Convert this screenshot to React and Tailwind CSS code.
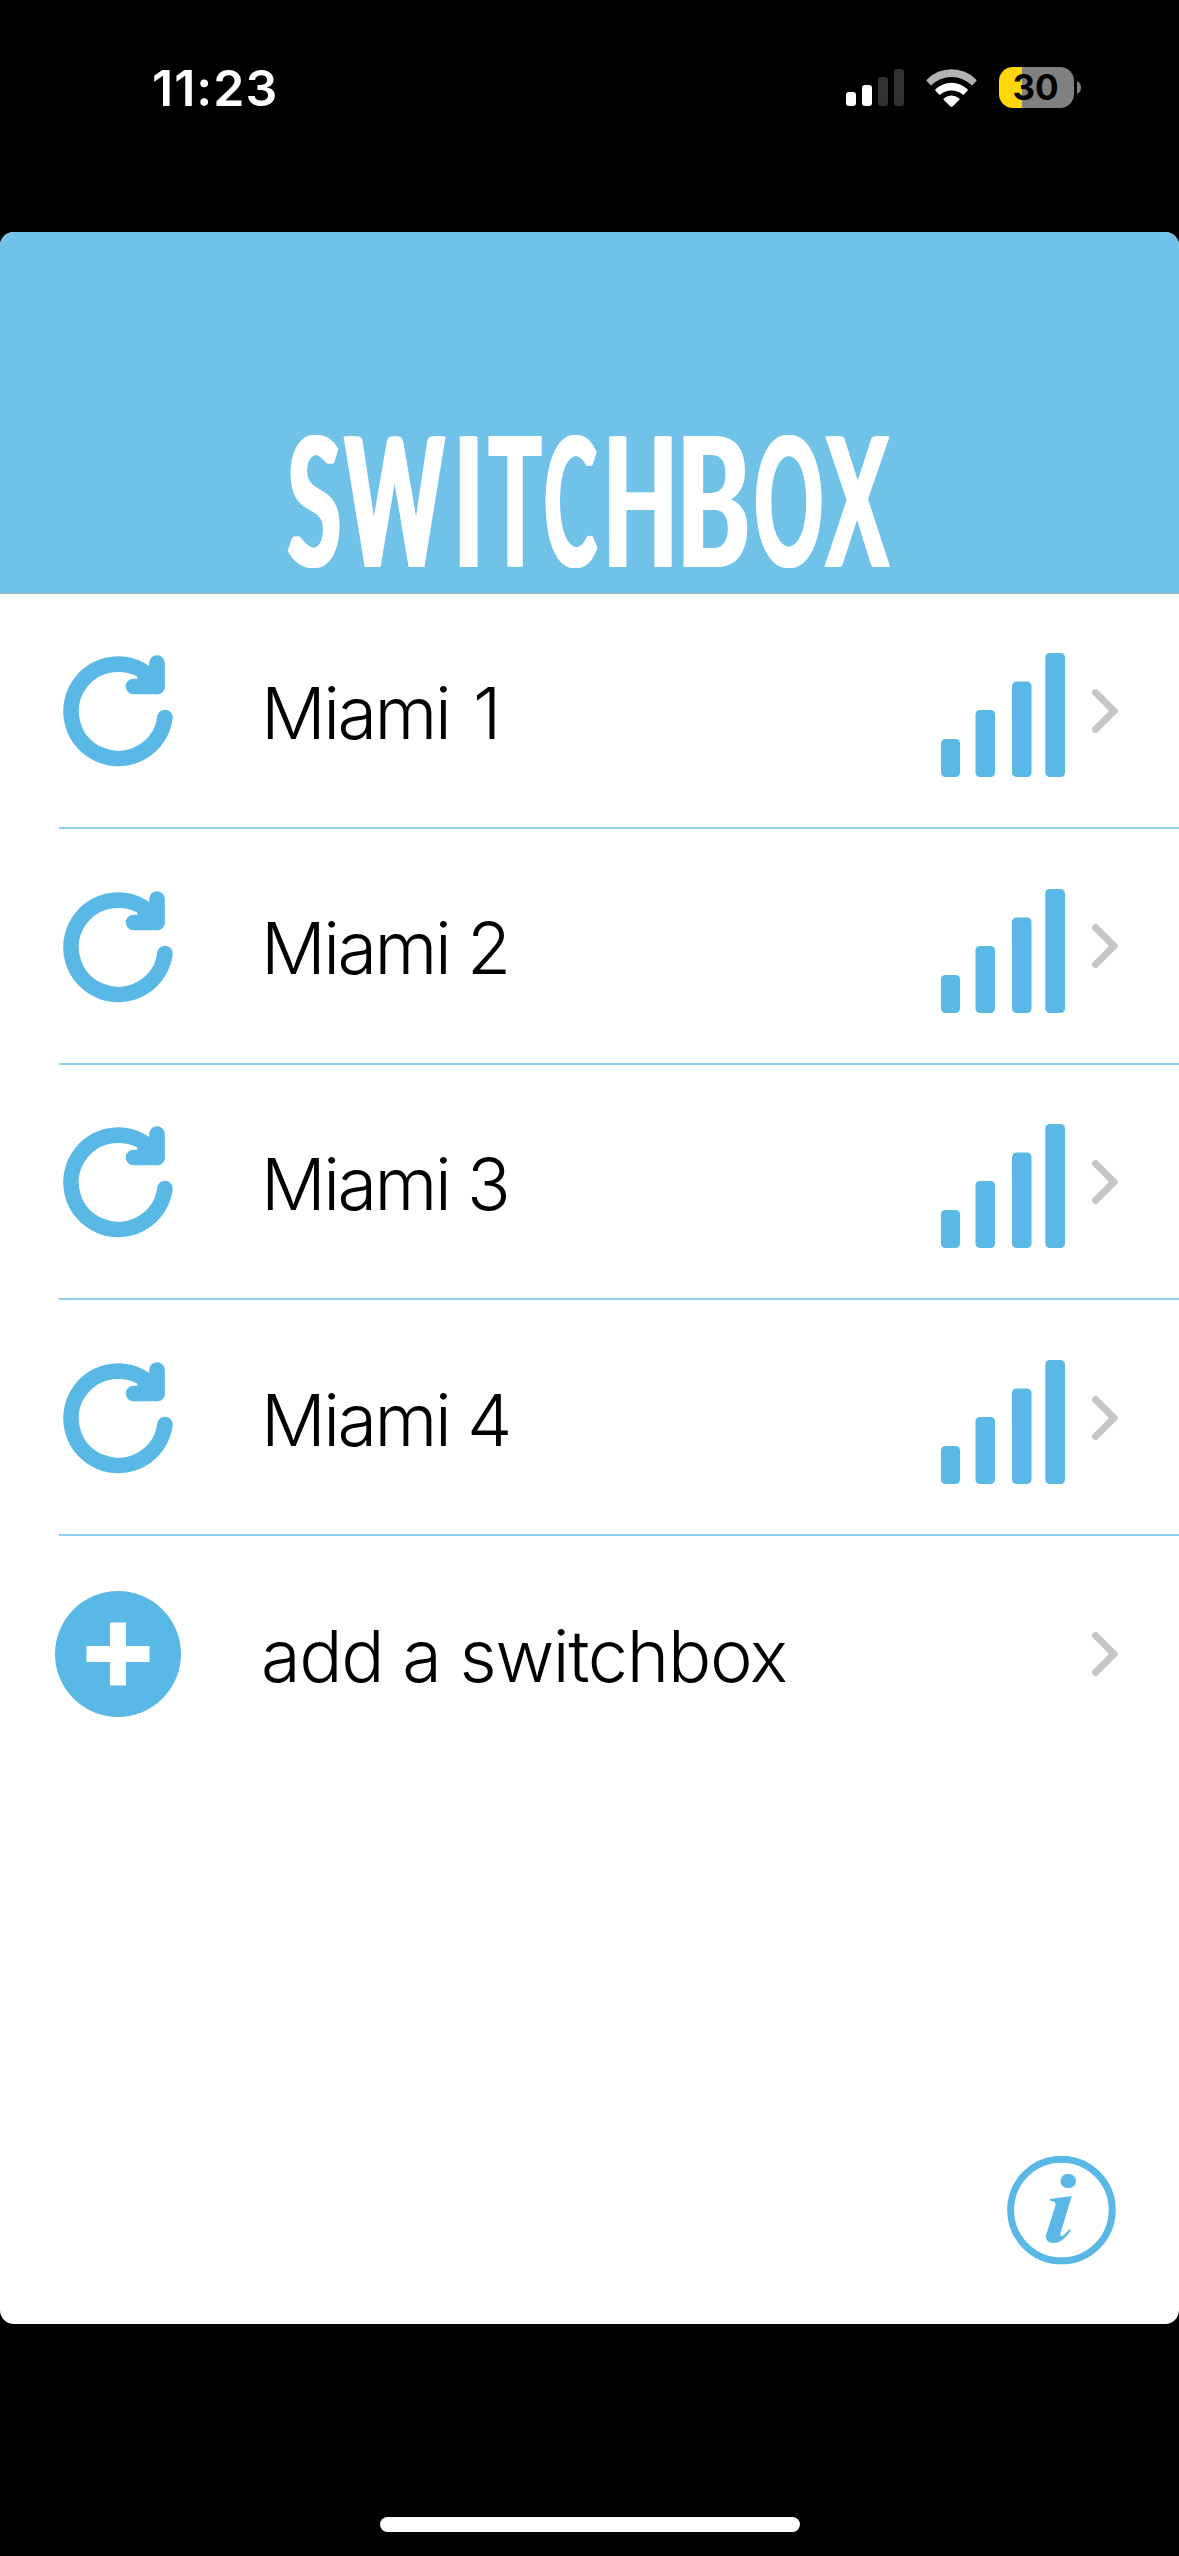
import React from 'react'

const boxes = [
    { id: 1, name: 'Miami 1', spacing: '[word-spacing:6px]' },
    { id: 2, name: 'Miami 2' },
    { id: 3, name: 'Miami 3' },
    { id: 4, name: 'Miami 4' },
]

// condensed wordmark, every letter has its own width and squeeze
const wordmark = [
    { char: 'S', cell: 'w-[54px]', squeeze: 'scale-x-[.54]' },
    { char: 'W', cell: 'ml-px w-[106px]', squeeze: 'scale-x-[.525]' },
    { char: 'I', cell: 'ml-[11px] w-[18.5px]', squeeze: 'scale-x-[.54]' },
    { char: 'T', cell: 'ml-[11px] w-[53.5px]', squeeze: 'scale-x-[.48]' },
    { char: 'C', cell: 'ml-[2.4px] w-[52px]', squeeze: 'scale-x-[.44]' },
    { char: 'H', cell: 'ml-[12.4px] w-[62.7px]', squeeze: 'scale-x-[.53]' },
    { char: 'B', cell: 'ml-[11.7px] w-[60.7px]', squeeze: 'scale-x-[.61]' },
    { char: 'O', cell: 'ml-[11px] w-[67.3px]', squeeze: 'scale-x-[.47]' },
    { char: 'X', cell: 'ml-[2.5px] w-[66px]', squeeze: 'scale-x-[.515]' },
]

function CellIcon() {
  return (
    <svg width="58" height="37" viewBox="0 0 58 37" className="shrink-0">
        <rect x="0" y="23" width="10" height="14" rx="3" fill="#fff" />
        <rect x="16" y="16" width="10" height="21" rx="3" fill="#fff" />
        <rect x="32" y="8" width="10" height="29" rx="3" fill="#333" />
        <rect x="48" y="0" width="10" height="37" rx="3" fill="#333" />
    </svg>
  )
}

function WifiIcon() {
  return (
    <svg width="51" height="38" viewBox="0 0 51 38" className="shrink-0">
        <path d="M.9 12.3Q0 11.4 1 10.4A34.5 34.5 0 0 1 50 10.4Q51 11.4 50.1 12.3L46 16.6A29 29 0 0 0 5 16.6Z" fill="#b3b3b3" />
        <path d="M9.5 21.7Q8.8 20.9 9.7 20.1A23 23 0 0 1 41.3 20.1Q42.2 20.9 41.5 21.7L37.3 26A17.5 17.5 0 0 0 13.7 26Z" fill="#fff" />
        <path d="M17.8 31Q17 30.2 18 29.3A11.4 11.4 0 0 1 33 29.3Q34 30.2 33.2 31L26.5 37.6Q25.5 38.4 24.5 37.6Z" fill="#fff" />
    </svg>
  )
}

function Battery() {
  return (
    <div className="flex items-center gap-[3px]">
        <div className="flex h-[41px] w-[75px] items-center justify-center overflow-hidden rounded-[14px] bg-[linear-gradient(to_right,#ffd60a_23px,#808080_23px)]">
            <span className="pr-0.5 font-['Inter',sans-serif] text-[35px] leading-[41px] font-bold text-black">30</span>
        </div>
        <svg width="4" height="13" viewBox="0 0 4 13">
            <path d="M0 0Q4 2 4 6.500Q4 11 0 13Z" fill="#808080" />
        </svg>
    </div>
  )
}

function StatusBar() {
  return (
    <div className="flex h-[232px] items-start justify-between pr-[98px] pl-[152px]">
        <div className="mt-[58px] font-['Inter',sans-serif] text-[50px] leading-[60px] font-semibold tracking-[1px] text-white">11:23</div>
        <div className="mt-[67px] flex h-[41px] items-center">
            <CellIcon />
            <div className="ml-[22px] flex"><WifiIcon /></div>
            <div className="ml-[22px]"><Battery /></div>
        </div>
    </div>
  )
}

function RefreshIcon() {
  return (
    <svg width="110" height="110" viewBox="0 0 110 110" fill="none" stroke="#5ab8e6" strokeWidth="15.6" strokeLinecap="round" strokeLinejoin="round" className="overflow-visible">
        <path d="M102 62.500A47.200 47.200 0 1 1 93 28" />
        <path d="M94 8V31.500H70.500" />
        <path d="M82 22L94 31.500" />
    </svg>
  )
}

function SignalIcon() {
  return (
    <svg width="124" height="124" viewBox="0 0 124 124" fill="#5ab8e6">
        <rect x="0" y="86" width="19" height="38" rx="4.500" />
        <rect x="34.500" y="57" width="19.500" height="67" rx="4.500" />
        <rect x="71" y="28.500" width="19.500" height="95.500" rx="4.500" />
        <rect x="104.300" y="0" width="19.700" height="124" rx="4.500" />
    </svg>
  )
}

function Chevron() {
  return (
    <svg width="26" height="44" viewBox="0 0 26 44" fill="none" stroke="#c6c6c8" strokeWidth="7" strokeLinecap="round">
        <path d="M3.500 3.500L22 22L3.500 40.500" />
    </svg>
  )
}

function PlusIcon() {
  return (
    <svg width="126" height="126" viewBox="0 0 126 126">
        <circle cx="63" cy="63" r="63" fill="#5ab8e6" />
        <path d="M63 31.500V94.500M31.500 63H94.500" stroke="#fff" strokeWidth="16" />
    </svg>
  )
}

function InfoIcon() {
  return (
    <svg width="109" height="109" viewBox="0 0 109 109" fill="#5ab8e6">
        <circle cx="54.400" cy="54" r="50.800" fill="none" stroke="#5ab8e6" strokeWidth="7" />
        <rect x="53.500" y="18" width="15.500" height="14" rx="7" />
        <path d="M43 43L64.700 40L53.300 78Q52.800 80.500 55 80Q57 79.500 62.300 73.200L63.700 74.300C58 83 53 87 46.500 87C41 87 38 83.500 39.300 78.500L48.300 50Q50 45 43 44.700Z" />
    </svg>
  )
}

function Row({ icon, label, spacing = '', signal, last }) {
  return (
    <li className="flex h-[235.7px] flex-col">
        <div className="flex flex-1 items-center pr-[61px]">
            <div className="flex w-[236px] shrink-0 justify-center">{icon}</div>
            <span className={`flex-1 pt-[5px] pl-[25px] font-['Inter',sans-serif] text-[72px] leading-[88px] font-light whitespace-nowrap text-black ${last ? 'tracking-[-0.018em]' : 'tracking-[-0.035em]'} ${spacing}`}>
                {label}
            </span>
            {signal && <div className="mr-[27px] pt-[10px]"><SignalIcon /></div>}
            <div className="pt-px"><Chevron /></div>
        </div>
        {!last && <div className="ml-[59px] h-[2px] shrink-0 bg-[#8fd0ef]"></div>}
    </li>
  )
}

function Header() {
  return (
    <header className="flex h-[362px] flex-col justify-end border-b border-[#a9b4bb] bg-[#71c2e9] pb-[6px]">
        <h1 className="h-[180px] pl-[287px] font-['Lato',sans-serif] text-[180px] leading-[180px] font-bold whitespace-nowrap text-white">
            {wordmark.map((letter) => (
                <span key={letter.char} className={`inline-flex justify-center ${letter.cell}`}>
                    <span className={`[text-shadow:-4px_0_#fff,4px_0_#fff] ${letter.squeeze}`}>{letter.char}</span>
                </span>
            ))}
        </h1>
    </header>
  )
}

export default function App() {
  return (
    <div className="flex h-[2556px] w-[1179px] flex-col bg-black">
        <StatusBar />
        <main className="flex h-[2092px] flex-col overflow-hidden rounded-[14px] bg-white">
            <Header />
            <ul className="-mt-[0.8px] flex-1">
                {boxes.map((box) => (
                    <Row key={box.id} icon={<RefreshIcon />} label={box.name} spacing={box.spacing} signal />
                ))}
                <Row icon={<PlusIcon />} label="add a switchbox" last />
            </ul>
            <button className="mr-[63px] mb-[59px] self-end">
                <InfoIcon />
            </button>
        </main>
        <div className="flex flex-1 items-end justify-center pb-6">
            <div className="h-[15px] w-[420px] rounded-full bg-white"></div>
        </div>
    </div>
  )
}
